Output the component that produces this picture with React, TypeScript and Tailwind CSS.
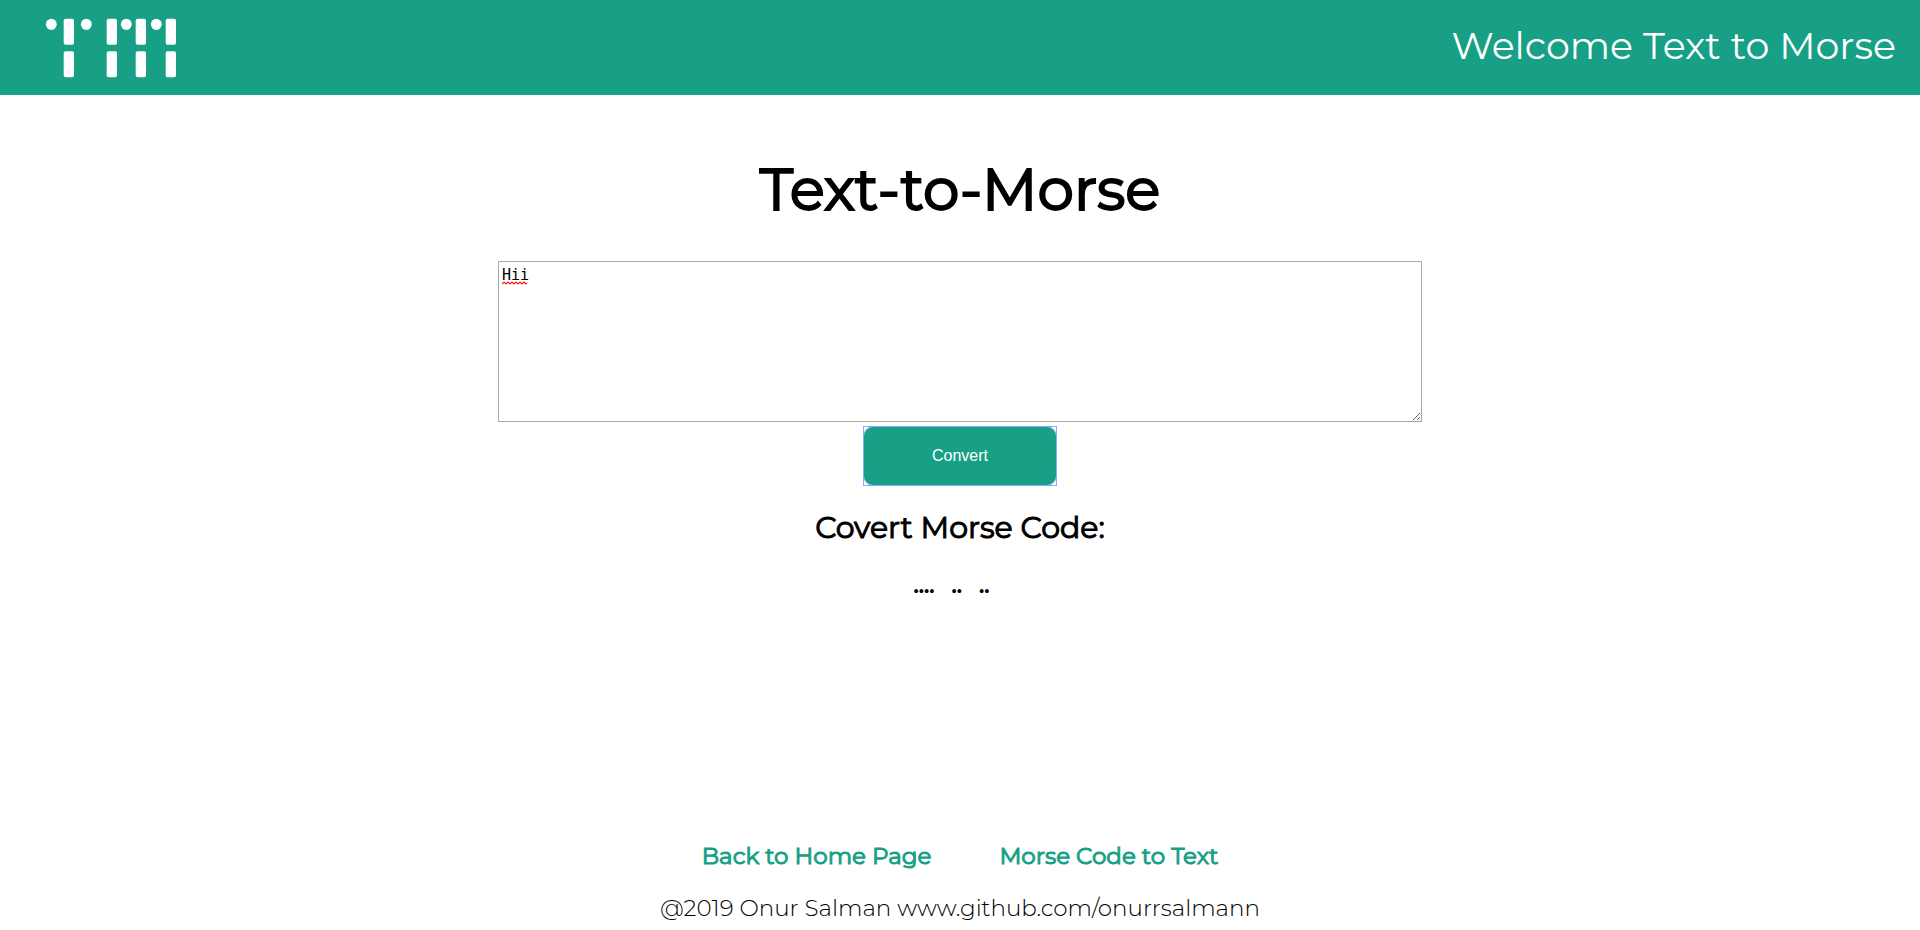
import React, { useState } from "react";

const MORSE: Record<string, string> = {
  a: ".-", b: "-...", c: "-.-.", d: "-..", e: ".", f: "..-.", g: "--.", h: "....", i: "..",
  j: ".---", k: "-.-", l: ".-..", m: "--", n: "-.", o: "---", p: ".--.", q: "--.-", r: ".-.",
  s: "...", t: "-", u: "..-", v: "...-", w: ".--", x: "-..-", y: "-.--", z: "--..",
};

function toMorse(text: string): string {
  return text
    .toLowerCase()
    .split("")
    .map((c) => (MORSE[c] ?? c) + "   ")
    .join("");
}

function Logo() {
  const bars = [64, 107, 136, 166];
  const dots = [51, 86, 126, 156];
  return (
    <svg role="img" aria-label="TM" viewBox="40 14 142 68" className="h-[68px] w-[142px]" fill="#fff">
      {bars.map((x) => (
        <g key={x}>
          <rect x={x - 0.3} y="18.7" width="10.3" height="26" rx="2" />
          <rect x={x - 0.3} y="51.3" width="10.3" height="26" rx="2" />
        </g>
      ))}
      {dots.map((x) => (
        <ellipse key={x} cx={x + 0.3} cy="24.3" rx="5.4" ry="5.6" />
      ))}
    </svg>
  );
}

export default function App() {
  const [text, setText] = useState("Hii");
  const [code, setCode] = useState(toMorse("Hii"));

  return (
    <div className="flex min-h-screen flex-col bg-white font-['Montserrat','Inter',sans-serif] text-black">
      <header className="flex h-[95px] items-center justify-between bg-[#18a086] pr-6 pl-10">
        <Logo />
        <p className="pb-1 text-[38px] leading-10 text-white">Welcome Text to Morse</p>
      </header>
      <main className="flex flex-1 flex-col items-center pt-16">
        <h1 className="text-[58px] leading-[62px] font-normal [-webkit-text-stroke:2px_currentColor]">Text-to-Morse</h1>
        <div className="relative mt-10 w-[924px] max-w-full">
          <textarea
            aria-label="Text to convert"
            spellCheck={false}
            value={text}
            onChange={(e) => setText(e.target.value)}
            className="block h-[161px] w-full resize border border-[#a9a9a9] bg-white px-[3px] py-1 font-['DejaVu_Sans_Mono',monospace] text-[15px] leading-[18px] outline-none"
          />
          {text === "Hii" && (
            <svg aria-hidden="true" className="absolute top-5 left-1 h-[4px] w-[27px]" viewBox="0 0 27 4" fill="none" stroke="#ff1a1a" strokeWidth="1.2">
              <path d="M0 3l2-2 2 2 2-2 2 2 2-2 2 2 2-2 2 2 2-2 2 2 2-2 2 2 1-1" />
            </svg>
          )}
        </div>
        <div className="mt-1 border border-[#7fb0fa] bg-white">
          <button
            type="button"
            onClick={() => setCode(toMorse(text))}
            className="block h-[58px] w-48 rounded-[10px] bg-[#18a086] font-['Liberation_Sans',sans-serif] text-base text-white ring-1 ring-[#7fb0fa] outline-none"
          >
            Convert
          </button>
        </div>
        <h2 className="mt-6 text-[30px] leading-9 font-normal [-webkit-text-stroke:1px_currentColor]">Covert Morse Code:</h2>
        <p className="mt-[26px] text-xl leading-7 font-bold whitespace-pre">{code}</p>
      </main>
      <footer className="flex flex-col items-center gap-6 pb-2 text-[23px] leading-7">
        <nav className="flex gap-[68px] text-[#18a086] [-webkit-text-stroke:1px_currentColor]">
          <a href="#home">Back to Home Page</a>
          <a href="#morse-to-text">Morse Code to Text</a>
        </nav>
        <p className="font-light">@2019 Onur Salman www.github.com/onurrsalmann</p>
      </footer>
    </div>
  );
}
